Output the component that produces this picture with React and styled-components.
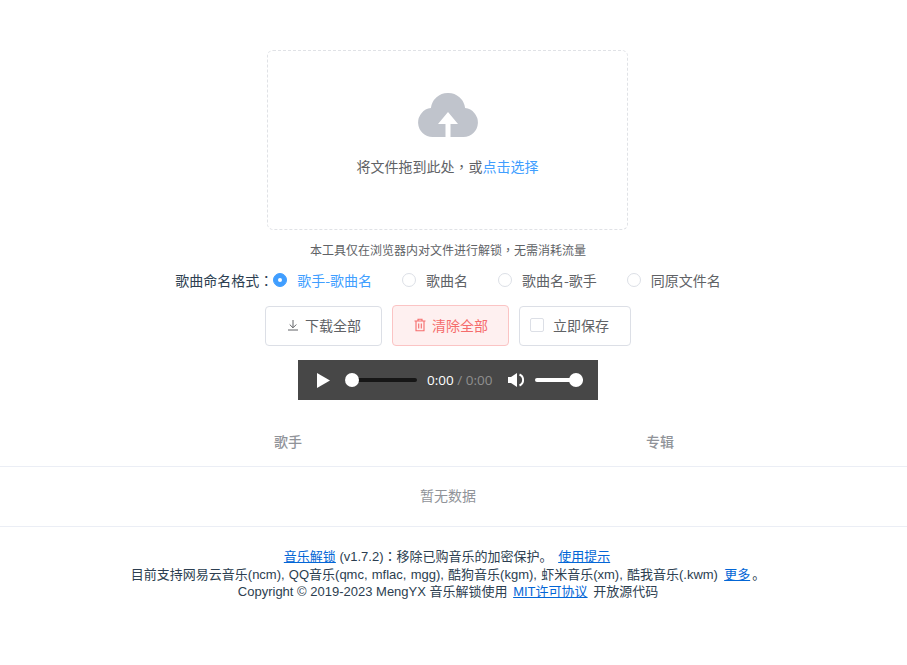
import styled, { createGlobalStyle } from 'styled-components';

const GlobalStyle = createGlobalStyle`
  html, body {
    margin: 0;
    background: #fff;
    overflow: hidden;
  }
  body {
    font-family: "Liberation Sans", "Noto Sans CJK SC", sans-serif;
    font-size: 14px;
    color: #2c3e50;
  }
`;

const Page = styled.div`
  width: 907px;
  height: 665px;
  padding-top: 50px;
  box-sizing: border-box;
`;

const Center = styled.div`
  width: 896px;
  display: flex;
  flex-direction: column;
  align-items: center;
`;

const Dragger = styled.div`
  width: 361px;
  height: 180px;
  margin-right: 1px;
  box-sizing: border-box;
  border: 1px dashed #e0e2e6;
  border-radius: 6px;
  display: flex;
  flex-direction: column;
  align-items: center;
  padding-top: 42px;
`;

const DropText = styled.div`
  margin-top: 19px;
  font-size: 14px;
  line-height: 20px;
  color: #606266;
  font-family: "Noto Sans CJK SC", sans-serif;
  em {
    font-style: normal;
    color: #409eff;
  }
`;

const Tip = styled.div`
  margin-top: 11px;
  font-size: 12px;
  line-height: 18px;
  color: #606266;
  font-family: "Noto Sans CJK SC", sans-serif;
`;

// centred full-width punctuation, as in the original font
const Punct = styled.span`
  font-family: "Noto Sans CJK TC", sans-serif;
`;

const FormatRow = styled.div`
  margin-top: 11px;
  height: 20px;
  display: flex;
  align-items: center;
  font-family: "Noto Sans CJK SC", sans-serif;
`;

const FormatLabel = styled.span`
  color: #2c3e50;
  width: 98px;
`;

const Radio = styled.label`
  display: flex;
  align-items: center;
  margin-right: ${props => props.last ? '0' : '30px'};
  color: ${props => props.checked ? '#409eff' : '#606266'};
`;

const RadioDot = styled.span`
  width: 14px;
  height: 14px;
  box-sizing: border-box;
  border-radius: 50%;
  border: 1px solid ${props => props.checked ? '#409eff' : '#dcdfe6'};
  background: ${props => props.checked ? '#409eff' : '#fff'};
  margin-right: 10px;
  display: flex;
  align-items: center;
  justify-content: center;
  &::after {
    content: "";
    width: 4px;
    height: 4px;
    border-radius: 50%;
    background: #fff;
  }
`;

const Actions = styled.div`
  margin-top: 15px;
  display: flex;
  align-items: flex-end;
  gap: 10px;
  font-family: "Noto Sans CJK SC", sans-serif;
`;

const Button = styled.div`
  width: ${props => props.width};
  height: ${props => props.danger ? '41px' : '40px'};
  box-sizing: border-box;
  padding-bottom: 2px;
  border: 1px solid ${props => props.danger ? '#fbc4c4' : '#dcdfe6'};
  border-radius: 4px;
  background: ${props => props.danger ? '#fef0f0' : '#fff'};
  color: ${props => props.danger ? '#f56c6c' : '#606266'};
  display: flex;
  align-items: center;
  justify-content: center;
  gap: 5px;
`;

const SaveButton = styled(Button)`
  justify-content: flex-start;
  padding-left: 10px;
`;

const CheckBox = styled.span`
  width: 14px;
  height: 14px;
  box-sizing: border-box;
  border: 1px solid #dcdfe6;
  border-radius: 2px;
  margin-right: 4px;
`;

const Player = styled.div`
  margin-top: 14px;
  width: 300px;
  height: 40px;
  background: #474747;
  display: flex;
  align-items: center;
  padding-left: 19px;
  box-sizing: border-box;
  font-family: "Open Sans", sans-serif;
  font-size: 13.5px;
`;

const Track = styled.div`
  position: relative;
  width: ${props => props.width};
  height: 4px;
  border-radius: 2px;
  background: ${props => props.light ? '#fff' : '#161616'};
  margin-left: ${props => props.gap};
  flex-shrink: 0;
`;

const Thumb = styled.span`
  position: absolute;
  top: -5px;
  ${props => props.end ? 'right: 0;' : 'left: 0;'}
  width: 14px;
  height: 14px;
  border-radius: 50%;
  background: #fff;
`;

const Time = styled.div`
  margin-left: 10px;
  width: 81px;
  color: #fff;
  white-space: nowrap;
  span {
    color: #8f8f8f;
  }
`;

const Table = styled.div`
  margin-top: 20px;
  width: 907px;
  color: #909399;
  font-family: "Noto Sans CJK SC", sans-serif;
`;

const TableHead = styled.div`
  display: grid;
  grid-template-columns: 372px 372px;
  padding: 0 0 5px 102px;
  box-sizing: border-box;
  height: 47px;
  align-items: center;
  border-bottom: 1px solid #ebeef5;
  font-weight: 500;
  text-align: center;
`;

const Empty = styled.div`
  height: 60px;
  padding: 0 11px 4px 0;
  box-sizing: border-box;
  display: flex;
  align-items: center;
  justify-content: center;
  border-bottom: 1px solid #ebeef5;
`;

const Footer = styled.div`
  width: 896px;
  margin-top: 20px;
  text-align: center;
  font-size: 13px;
  line-height: 17.5px;
  color: #2c3e50;
  a {
    color: #0366d6;
    text-decoration: underline;
    margin: 0 2px;
  }
`;

const TitleLink = styled.a`
  && {
    margin: 0;
  }
`;

const WideLine = styled.div`
  word-spacing: 0.6px;
`;

const UploadIcon = () => (
  <svg width="60" height="44" viewBox="0 0 60 44">
    <path
      fill="#c0c4cc"
      d="M14.5 44a14.5 14.5 0 0 1-1.6-28.9A17 17 0 0 1 30 0a17 17 0 0 1 17.1 15.1A14.5 14.5 0 0 1 45.5 44z"
    />
    <path fill="#fff" d="M30 19 40 31H32.5V44H27.5V31H20z" />
  </svg>
);

const DownloadIcon = () => (
  <svg width="14" height="14" viewBox="0 0 14 14" fill="none" stroke="#606266" strokeWidth="1">
    <path d="M7 2V9.5M3.7 6.5 7 9.8 10.3 6.5M2 12H12" />
  </svg>
);

const TrashIcon = () => (
  <svg width="14" height="14" viewBox="0 0 14 14" fill="none" stroke="#f56c6c" strokeWidth="1.1">
    <path d="M1.5 3H12.5M5 3V1.2H9V3M3 3V12.8H11V3M5.7 5.5V10.5M8.3 5.5V10.5" />
  </svg>
);

const PlayIcon = () => (
  <svg width="13" height="15" viewBox="0 0 13 15">
    <path fill="#fff" d="M0 0V15L13 7.5z" />
  </svg>
);

const VolumeIcon = () => (
  <svg width="16" height="16" viewBox="0 0 16 16">
    <path fill="#fff" d="M0 5H3L9 1V15L3 11H0z" />
    <path fill="none" stroke="#fff" strokeWidth="2" d="M11.5 2.5A6 6 0 0 1 11.5 13.5" />
  </svg>
);

const formats = ['歌手-歌曲名', '歌曲名', '歌曲名-歌手', '同原文件名'];

const App = () => {
  return (
    <Page>
      <GlobalStyle />
      <Center>
        <Dragger>
          <UploadIcon />
          <DropText>将文件拖到此处<Punct>，</Punct>或<em>点击选择</em></DropText>
        </Dragger>
        <Tip>本工具仅在浏览器内对文件进行解锁<Punct>，</Punct>无需消耗流量</Tip>
        <FormatRow>
          <FormatLabel>歌曲命名格式<Punct>：</Punct></FormatLabel>
          {formats.map((name, i) => (
            <Radio key={name} checked={i === 0} last={i === formats.length - 1}>
              <RadioDot checked={i === 0} />
              {name}
            </Radio>
          ))}
        </FormatRow>
        <Actions>
          <Button width="117px"><DownloadIcon />下载全部</Button>
          <Button width="117px" danger><TrashIcon />清除全部</Button>
          <SaveButton width="112px"><CheckBox />立即保存</SaveButton>
        </Actions>
        <Player>
          <PlayIcon />
          <Track width="72px" gap="15px"><Thumb /></Track>
          <Time>0:00 <span>/ 0:00</span></Time>
          <VolumeIcon />
          <Track width="48px" gap="11px" light><Thumb end /></Track>
        </Player>
      </Center>
      <Table>
        <TableHead>
          <span>歌手</span>
          <span>专辑</span>
        </TableHead>
        <Empty>暂无数据</Empty>
      </Table>
      <Footer>
        <div><TitleLink>音乐解锁</TitleLink> (v1.7.2)<Punct>：</Punct>移除已购音乐的加密保护。 <a>使用提示</a></div>
        <WideLine>目前支持网易云音乐(ncm), QQ音乐(qmc, mflac, mgg), 酷狗音乐(kgm), 虾米音乐(xm), 酷我音乐(.kwm) <a>更多</a>。</WideLine>
        <div>Copyright © 2019-2023 MengYX 音乐解锁使用 <a>MIT许可协议</a> 开放源代码</div>
      </Footer>
    </Page>
  )
}

export default App
